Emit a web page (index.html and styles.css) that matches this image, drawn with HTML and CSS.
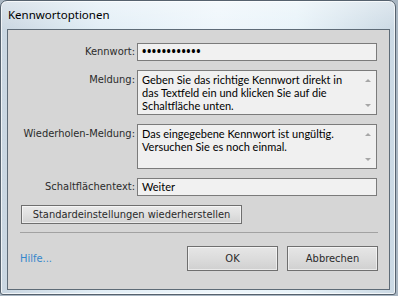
FILE: index.html
```html
<!DOCTYPE html>
<html lang="de">
<head>
<meta charset="utf-8">
<title>Kennwortoptionen</title>
<link rel="stylesheet" href="styles.css">
</head>
<body>
<div class="window">
  <div class="titlebar"><span class="title">Kennwortoptionen</span></div>
  <div class="client">
    <div class="form">
      <div class="lbl lbl-input">Kennwort:</div>
      <div class="input pw">••••••••••••</div>

      <div class="lbl lbl-area">Meldung:</div>
      <div class="area">
        <div class="area-text">Geben Sie das richtige Kennwort direkt in<br>das Textfeld ein und klicken Sie auf die<br>Schaltfläche unten.</div>
        <div class="scroll"><span class="arr up"></span><span class="arr down"></span></div>
      </div>

      <div class="lbl lbl-area">Wiederholen-Meldung:</div>
      <div class="area">
        <div class="area-text">Das eingegebene Kennwort ist ungültig.<br>Versuchen Sie es noch einmal.</div>
        <div class="scroll"><span class="arr up"></span><span class="arr down"></span></div>
      </div>

      <div class="lbl lbl-input">Schaltflächentext:</div>
      <div class="input">Weiter</div>
    </div>

    <div class="reset-row"><button class="btn btn-reset">Standardeinstellungen wiederherstellen</button></div>
    <div class="sep"></div>

    <div class="footer">
      <a class="help">Hilfe...</a>
      <div class="actions">
        <button class="btn btn-action">OK</button>
        <button class="btn btn-action">Abbrechen</button>
      </div>
    </div>
  </div>
</div>
</body>
</html>
```
FILE: styles.css
```css
html, body {
  margin: 0;
  padding: 0;
}
body {
  width: 398px;
  height: 296px;
  overflow: hidden;
  background: #a9b6c2;
  font-family: "DejaVu Sans Condensed", "Noto Sans", sans-serif;
}
.window {
  box-sizing: border-box;
  width: 396px;
  height: 295px;
  border: 1px solid #56626e;
  border-radius: 7px 7px 3px 3px;
  background:
    linear-gradient(to bottom, rgba(255,255,255,0.35), rgba(255,255,255,0) 30px),
    linear-gradient(to right, #c9d6e1 0%, #e2eef6 25%, #eef6fb 55%, #e8f3f9 75%, #cbd9e4 100%);
  box-shadow: inset 0 0 0 1px rgba(255,255,255,0.7);
  display: flex;
  flex-direction: column;
  padding: 0 5px 4px 6px;
}
.titlebar {
  height: 28px;
  flex: none;
  display: flex;
  align-items: flex-start;
  padding: 6px 0 0 1px;
  box-sizing: border-box;
}
.title {
  font-family: "Noto Sans", sans-serif;
  font-size: 11.5px;
  line-height: 16px;
  color: #000;
}
.client {
  flex: 1;
  border: 1px solid #5e6b77;
  background: #d6d6d6;
  display: flex;
  flex-direction: column;
}
.form {
  display: grid;
  grid-template-columns: 115px 240px;
  column-gap: 2px;
  row-gap: 9px;
  padding: 13px 11px 0 12px;
}
.lbl {
  font-size: 11px;
  color: #2b2b2b;
  text-align: right;
  white-space: nowrap;
}
.lbl-input {
  line-height: 18px;
}
.lbl-area {
  line-height: 13px;
  padding-top: 3px;
}
.input {
  box-sizing: border-box;
  height: 18px;
  border: 1px solid #7b7b7b;
  background: #f1f1f1;
  font-family: "Lato", "Noto Sans", sans-serif;
  font-size: 11px;
  line-height: 16px;
  color: #000;
  padding: 0 4px;
  white-space: nowrap;
}
.pw {
  font-family: "Noto Sans", sans-serif;
  font-size: 11.5px;
  letter-spacing: 0.6px;
  font-weight: bold;
}
.area {
  box-sizing: border-box;
  height: 45px;
  border: 1px solid #7b7b7b;
  background: #f0f0f0;
  display: flex;
}
.area-text {
  flex: 1;
  font-family: "Lato", "Noto Sans", sans-serif;
  font-size: 11px;
  line-height: 13px;
  color: #000;
  padding: 2px 3px 0 4px;
  white-space: nowrap;
}
.scroll {
  width: 16px;
  flex: none;
  display: flex;
  flex-direction: column;
  justify-content: space-between;
  align-items: center;
  padding: 8px 0 7px;
  box-sizing: border-box;
}
.arr {
  width: 0;
  height: 0;
  border-left: 3px solid transparent;
  border-right: 3px solid transparent;
}
.arr.up {
  border-bottom: 3px solid #a6a6a6;
}
.arr.down {
  border-top: 3px solid #a6a6a6;
}
.btn {
  box-sizing: border-box;
  margin: 0;
  font-family: inherit;
  font-size: 11px;
  color: #2a2a2a;
  border: 1px solid #6f6f6f;
  background: linear-gradient(to bottom, #eaeaea 0%, #e0e0e0 50%, #d2d2d2 100%);
  box-shadow: inset 0 0 0 1px rgba(255,255,255,0.55);
  padding: 0;
  cursor: default;
}
.reset-row {
  padding: 9px 0 0 13px;
  display: flex;
}
.btn-reset {
  width: 221px;
  height: 19px;
  line-height: 17px;
}
.sep {
  height: 1px;
  background: #a2a2a2;
  margin: 8px 11px 0 12px;
}
.footer {
  display: flex;
  justify-content: space-between;
  align-items: center;
  padding: 13px 11px 0 12px;
}
.help {
  font-size: 11px;
  color: #3487cc;
}
.actions {
  display: flex;
  gap: 9px;
}
.btn-action {
  width: 91px;
  height: 25px;
  line-height: 23px;
  background: linear-gradient(to bottom, #e6e6e6 0%, #dcdcdc 50%, #d0d0d0 100%);
}
```
